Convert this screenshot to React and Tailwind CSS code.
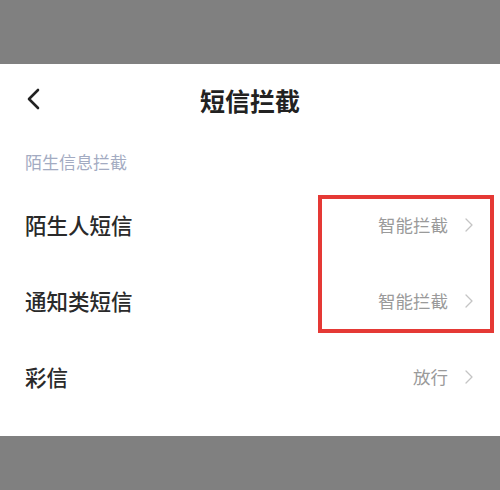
import React from "react";

const ROWS = [
  { label: "陌生人短信", value: "智能拦截" },
  { label: "通知类短信", value: "智能拦截" },
  { label: "彩信", value: "放行" },
];

function Chevron({ className }) {
  return (
    <svg viewBox="0 0 8 14" className={className} fill="none" stroke="currentColor" strokeWidth="1.3" strokeLinecap="round" strokeLinejoin="round">
      <path d="M1 1l6 6-6 6" />
    </svg>
  );
}

export default function App() {
  return (
    <div
      className="relative w-[500px] h-[490px] flex flex-col bg-[#808080]"
      style={{ fontFamily: '"Noto Sans CJK SC", "Noto Sans", sans-serif' }}
    >
      <div className="h-[64px] shrink-0" />
      <div className="h-[372px] bg-white flex flex-col">
        <div className="relative h-[72px] flex items-center justify-center">
          <svg viewBox="0 0 14 22" className="absolute left-[26px] top-[24px] w-[14px] h-[22px] text-[#222]" fill="none" stroke="currentColor" strokeWidth="2.6" strokeLinecap="round" strokeLinejoin="round">
            <path d="M12 2L3 11l9 9" />
          </svg>
          <span className="text-[25px] font-semibold text-[#222] leading-none">短信拦截</span>
        </div>
        <div className="h-[51px] flex items-center px-[25px]">
          <span className="text-[17px] text-[#a3abc2] leading-none">陌生信息拦截</span>
        </div>
        {ROWS.map((r, i) => (
          <div key={i} className="h-[76px] flex items-center justify-between pl-[25px] pr-[27px]">
            <span className="text-[21.5px] font-medium text-[#2a2a2a] leading-none">{r.label}</span>
            <div className="flex items-center gap-[17px]">
              <span className="text-[17.5px] text-[#9a9a9a] leading-none">{r.value}</span>
              <Chevron className="w-[8px] h-[14px] text-[#c4c4c4]" />
            </div>
          </div>
        ))}
      </div>
      <div className="flex-1" />
      <div className="absolute left-[318px] top-[195px] w-[176px] h-[138px] border-[4px] border-[#e53935]" />
    </div>
  );
}
